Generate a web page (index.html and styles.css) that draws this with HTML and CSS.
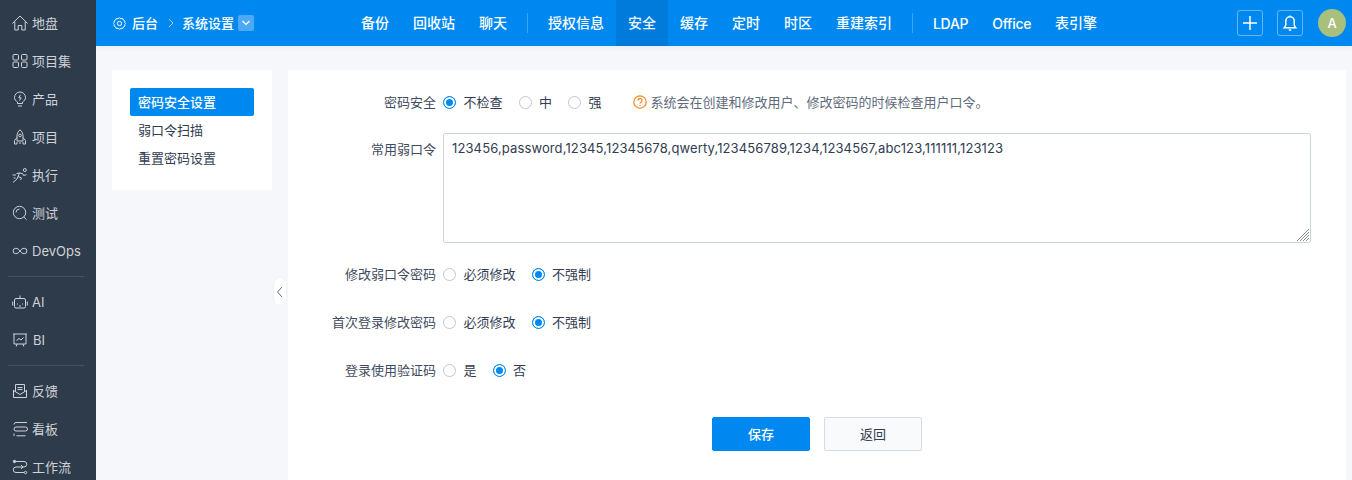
FILE: index.html
```html
<!DOCTYPE html>
<html lang="zh-CN">
<head>
<meta charset="utf-8">
<title>系统设置</title>
<link rel="stylesheet" href="styles.css">
</head>
<body>
<div class="app">
  <aside class="sidebar">
    <a class="side-item"><svg class="side-icon" viewBox="0 0 16 16"><path d="M.3 8.500 8 1l7.700 7.500M2.800 6.500v8.500h3.400v-4.500h3.600V15h3.400V6.500"/></svg><span class="cjk">地盘</span></a>
    <a class="side-item"><svg class="side-icon" viewBox="0 0 16 16"><rect x="1" y="1.500" width="5.500" height="5.500" rx="1"/><rect x="9.500" y="1.500" width="5.500" height="5.500" rx="1"/><rect x="1" y="9" width="5.500" height="5.500" rx="1"/><rect x="9.500" y="9" width="5.500" height="5.500" rx="1"/></svg><span class="cjk">项目集</span></a>
    <a class="side-item"><svg class="side-icon" viewBox="0 0 16 16"><path d="M5.500 12.500V11C3.800 10 2.500 8.500 2.500 6.500a5.500 5.500 0 0 1 11 0c0 2-1.300 3.500-3 4.500v1.500zM6 15h4M8.500 3.800 6.800 6.800h2.400L7.500 9.500"/></svg><span class="cjk">产品</span></a>
    <a class="side-item"><svg class="side-icon" viewBox="0 0 16 16"><path d="M8 .8c2 1.700 3 3.800 3 6.200v5H5V7c0-2.400 1-4.500 3-6.200zM5 8.500 2.500 11.500V15H5v-2M11 8.500l2.500 3V15H11v-2"/><circle cx="8" cy="6.500" r="1.300"/><path d="M8 13v2"/></svg><span class="cjk">项目</span></a>
    <a class="side-item"><svg class="side-icon" viewBox="0 0 16 16"><path d="M1 15.500l4-3.500 1-2.500L9.500 11l-1 2M6 9.500 7.500 6l-3 .5M7.500 6l3 .5 1 2 3-.8M.5 8H4M1.500 11H3.500"/><circle cx="12.800" cy="3" r="1.500"/></svg><span class="cjk">执行</span></a>
    <a class="side-item"><svg class="side-icon" viewBox="0 0 16 16"><circle cx="7.500" cy="7.500" r="6.200"/><path d="m11.800 12 2.700 2.700M4 7.500a3.500 3.500 0 0 1 3.500-3.500"/></svg><span class="cjk">测试</span></a>
    <a class="side-item"><svg class="side-icon" viewBox="0 0 16 16"><path d="M8 8C6.800 6.300 5.500 5.300 3.800 5.300a2.700 2.700 0 0 0 0 5.400c1.700 0 3-1 4.200-2.700zm0 0c1.200-1.700 2.500-2.700 4.200-2.700a2.700 2.700 0 0 1 0 5.400c-1.700 0-3-1-4.200-2.700z"/></svg><span>DevOps</span></a>
    <div class="side-divider"></div>
    <a class="side-item"><svg class="side-icon" viewBox="0 0 16 16"><rect x="2.500" y="4.500" width="11" height="9.500" rx="1.500"/><path d="M8 4.500V1.500M.7 7.500v4M15.300 7.500v4M5.500 9.500v1M10.500 9.500v1M7 12h2"/></svg><span>AI</span></a>
    <a class="side-item"><svg class="side-icon" viewBox="0 0 16 16"><path d="M1 2h14M2 2v10h12V2M5 12l-.8 2.500M11 12l.8 2.500M4.500 8.500 7 6.500l2 1.500 2.500-2.500"/></svg><span class="side-bi">BI</span></a>
    <div class="side-divider"></div>
    <a class="side-item"><svg class="side-icon" viewBox="0 0 16 16"><path d="M1.500 7v7.500h13V7M1.500 7.500 8 11.500l6.500-4M3.500 8.500V1.500h9v7M5.500 4.500h5M5.500 6.500h5"/></svg><span class="cjk">反馈</span></a>
    <a class="side-item"><svg class="side-icon" viewBox="0 0 16 16"><path d="M2 3.500a2 2 0 0 1 2-2h11M4 6h9.500a1.800 1.800 0 0 1 0 4H4a2 2 0 0 1 0-4zM2 12.500V15M4.500 14.800h9"/></svg><span class="cjk">看板</span></a>
    <a class="side-item"><svg class="side-icon" viewBox="0 0 16 16"><circle cx="2.500" cy="2.500" r="1.200" fill="#ced3d9"/><circle cx="13.500" cy="13.500" r="1.200"/><path d="M4 2.500h8a2.700 2.700 0 0 1 0 5.500H4a2.700 2.700 0 0 0 0 5.500h8M9 6l2 2-2 2"/></svg><span class="cjk">工作流</span></a>
  </aside>
  <div class="page">
    <header class="topbar">
      <div class="crumbs">
        <svg class="crumb-gear" viewBox="0 0 14 14"><path d="M7 .8l1.600 1 1.900-.1.800 1.700 1.600 1-.2 1.600.8 1-.8 1 .2 1.600-1.600 1-.8 1.700-1.900-.1-1.600 1-1.600-1-1.900.1-.8-1.700-1.600-1 .2-1.600-.8-1 .8-1-.2-1.600 1.600-1 .8-1.700 1.900.1z"/><circle cx="7" cy="7" r="2.300"/></svg>
        <span class="crumb-text cjk">后台</span>
        <svg class="crumb-sep" viewBox="0 0 8 10"><path d="M2 1l4 4-4 4"/></svg>
        <span class="crumb-text cjk">系统设置</span>
        <span class="crumb-drop"><svg viewBox="0 0 10 6"><path d="M1.500 1 5 4.500 8.500 1"/></svg></span>
      </div>
      <nav class="nav">
        <a class="nav-item nav-cjk">备份</a>
        <a class="nav-item nav-cjk">回收站</a>
        <a class="nav-item nav-cjk">聊天</a>
        <i class="nav-sep"></i>
        <a class="nav-item nav-cjk">授权信息</a>
        <a class="nav-item nav-cjk nav-active">安全</a>
        <a class="nav-item nav-cjk">缓存</a>
        <a class="nav-item nav-cjk">定时</a>
        <a class="nav-item nav-cjk">时区</a>
        <a class="nav-item nav-cjk">重建索引</a>
        <i class="nav-sep"></i>
        <a class="nav-item nav-latin">LDAP</a>
        <a class="nav-item nav-latin">Office</a>
        <a class="nav-item nav-cjk">表引擎</a>
      </nav>
      <div class="tools">
        <button class="tool-btn"><svg viewBox="0 0 16 16"><path d="M8 1v14M1 8h14"/></svg></button>
        <button class="tool-btn"><svg viewBox="0 0 16 16"><path d="M2.300 12.800h11.400c-1-1-1.500-2-1.500-3.500V6a4.200 4.200 0 0 0-8.400 0v3.300c0 1.500-.5 2.500-1.500 3.500zM8 .5v1.300M6.800 15h2.400"/></svg></button>
        <span class="avatar">A</span>
      </div>
    </header>
    <main class="content">
      <section class="menu-card">
        <a class="menu-item menu-active">密码安全设置</a>
        <a class="menu-item">弱口令扫描</a>
        <a class="menu-item">重置密码设置</a>
      </section>
      <button class="collapse"><svg viewBox="0 0 8 12"><path d="M6 1 1.500 6 6 11"/></svg></button>
      <section class="form-card">
        <div class="row">
          <label class="row-label cjk">密码安全</label>
          <div class="options">
            <span class="opt"><i class="radio radio-on"></i><span class="cjk">不检查</span></span>
            <span class="opt"><i class="radio"></i><span class="cjk">中</span></span>
            <span class="opt"><i class="radio"></i><span class="cjk">强</span></span>
            <span class="hint"><svg viewBox="0 0 14 14"><circle cx="7" cy="7" r="6.200"/><path d="M5 5.500a2 2 0 1 1 3 1.700c-.7.400-1 .8-1 1.600M7 10v1"/></svg><span class="cjk">系统会在创建和修改用户、修改密码的时候检查用户口令。</span></span>
          </div>
        </div>
        <div class="row row-area">
          <label class="row-label">常用弱口令</label>
          <div class="area-wrap">
            <textarea class="weak-input">123456,password,12345,12345678,qwerty,123456789,1234,1234567,abc123,111111,123123</textarea>
            <svg class="area-grip" viewBox="0 0 14 14"><path d="M13 1 1 13M13 4 4 13M13 7 7 13M13 10 10 13"/></svg>
          </div>
        </div>
        <div class="row">
          <label class="row-label cjk">修改弱口令密码</label>
          <div class="options">
            <span class="opt"><i class="radio"></i><span class="cjk">必须修改</span></span>
            <span class="opt"><i class="radio radio-on"></i><span class="cjk">不强制</span></span>
          </div>
        </div>
        <div class="row">
          <label class="row-label cjk">首次登录修改密码</label>
          <div class="options">
            <span class="opt"><i class="radio"></i><span class="cjk">必须修改</span></span>
            <span class="opt"><i class="radio radio-on"></i><span class="cjk">不强制</span></span>
          </div>
        </div>
        <div class="row">
          <label class="row-label cjk">登录使用验证码</label>
          <div class="options">
            <span class="opt"><i class="radio"></i><span class="cjk">是</span></span>
            <span class="opt"><i class="radio radio-on"></i><span class="cjk">否</span></span>
          </div>
        </div>
        <div class="actions">
          <button class="btn btn-primary">保存</button>
          <button class="btn">返回</button>
        </div>
      </section>
    </main>
  </div>
</div>
</body>
</html>
```
FILE: styles.css
```css
* { box-sizing: border-box; }
html, body { margin: 0; height: 480px; overflow: hidden; }
body {
  font-family: Inter, "Noto Sans CJK SC", sans-serif;
  font-size: 13px;
  color: #313c52;
  background: #f6f7fa;
}
.app { display: flex; height: 480px; overflow: hidden; }
.cjk { padding-bottom: 2px; }

.sidebar {
  width: 96px;
  flex: none;
  height: 480px;
  overflow: hidden;
  padding-top: 4px;
  background: #2e3b4b;
  color: #ced3d9;
}
.side-item {
  display: flex;
  align-items: center;
  gap: 4px;
  height: 38px;
  padding-left: 12px;
  white-space: nowrap;
}
.side-icon {
  width: 16px;
  height: 16px;
  flex: none;
  fill: none;
  stroke: #ced3d9;
  stroke-width: 1;
}
.side-bi { margin-left: 1px; }
.side-divider { height: 1px; margin: 6px 12px 6px 8px; background: #445261; }

.page { flex: 1; min-width: 0; display: flex; flex-direction: column; height: 480px; }

.topbar {
  display: flex;
  align-items: center;
  height: 46px;
  flex: none;
  background: #0088f1;
  color: #fff;
  box-shadow: 0 1px 6px rgba(0, 0, 0, .06);
  position: relative;
}
.crumbs { display: flex; align-items: center; width: 253px; flex: none; padding-left: 17px; }
.crumb-gear { width: 13px; height: 13px; fill: none; stroke: #fff; stroke-width: 1; margin-right: 6px; }
.crumb-text { font-weight: 500; }
.crumb-sep { width: 8px; height: 10px; margin: 0 7px 0 9px; fill: none; stroke: #a6d3fa; stroke-width: 1; }
.crumb-drop {
  display: flex;
  align-items: center;
  justify-content: center;
  width: 16px;
  height: 16px;
  margin-left: 4px;
  border-radius: 2px;
  background: #4da9f5;
}
.crumb-drop svg { width: 10px; height: 6px; fill: none; stroke: #fff; stroke-width: 1.200; }

.nav { display: flex; align-items: center; height: 46px; }
.nav-item {
  display: flex;
  align-items: center;
  height: 46px;
  padding: 0 12px;
  font-size: 14px;
  font-weight: 500;
  white-space: nowrap;
}
.nav-cjk { padding-bottom: 2px; }
.nav-latin { letter-spacing: -.3px; }
.nav-active { background: #007bdb; color: #e6f3fe; }
.nav-sep { width: 1px; height: 20px; margin: 0 8px; background: #40a5f4; }

.tools { margin-left: auto; display: flex; align-items: center; gap: 14px; padding-right: 6px; }
.tool-btn {
  display: flex;
  align-items: center;
  justify-content: center;
  width: 26px;
  height: 26px;
  padding: 0;
  border: 1px solid #66b6f6;
  border-radius: 3px;
  background: transparent;
}
.tool-btn svg { width: 16px; height: 16px; fill: none; stroke: #fff; stroke-width: 1.500; }
.avatar {
  display: flex;
  align-items: center;
  justify-content: center;
  width: 28px;
  height: 28px;
  margin-left: 1px;
  border-radius: 50%;
  background: #a8bf7d;
  color: #fff;
  font-size: 13px;
  font-weight: 500;
}

.content {
  position: relative;
  flex: 1;
  min-height: 0;
  display: flex;
  align-items: flex-start;
  gap: 16px;
  padding: 24px 6px 0 16px;
}
.menu-card {
  width: 160px;
  height: 120px;
  flex: none;
  padding: 18px;
  background: #fff;
}
.menu-item {
  display: flex;
  align-items: center;
  height: 28px;
  padding-left: 8px;
  padding-bottom: 2px;
  border-radius: 2px;
  color: #313c52;
}
.menu-active { background: #0088f1; color: #fff; font-weight: 500; }

.collapse {
  position: absolute;
  left: 178px;
  top: 232px;
  display: flex;
  align-items: center;
  justify-content: center;
  width: 12px;
  height: 27px;
  padding: 0;
  border: 0;
  border-radius: 6px;
  background: #fff;
  box-shadow: 0 0 2px rgba(0, 0, 0, .08);
}
.collapse svg { width: 8px; height: 12px; fill: none; stroke: #5e6a7a; stroke-width: 1; }

.form-card {
  flex: 1;
  min-width: 0;
  height: 410px;
  padding-top: 16px;
  background: #fff;
}
.row { display: flex; align-items: center; gap: 7px; height: 32px; margin-bottom: 16px; }
.row-area { align-items: flex-start; height: 110px; margin-top: -1px; margin-bottom: 15px; }
.row-area .row-label { padding-top: 6px; }
.row-label { width: 148px; flex: none; text-align: right; color: #3f4b60; }
.options { display: flex; align-items: center; gap: 16px; color: #313c52; }
.opt { display: flex; align-items: center; gap: 7.500px; white-space: nowrap; }
.radio {
  width: 13px;
  height: 13px;
  flex: none;
  border: 1px solid #c0c7d4;
  border-radius: 50%;
  background: #fff;
}
.radio-on { border-color: #0088f1; background: #0088f1; box-shadow: inset 0 0 0 2px #fff; }
.hint { display: flex; align-items: center; margin-left: 15px; color: #5e6a7a; white-space: nowrap; }
.hint svg { width: 14px; height: 14px; margin-right: 4px; fill: none; stroke: #f58b2f; stroke-width: 1.300; }
.area-wrap { position: relative; width: 868px; height: 110px; }
.weak-input {
  display: block;
  width: 868px;
  height: 110px;
  padding: 5px 8px;
  border: 1px solid #ced3e0;
  border-radius: 2px;
  outline: 0;
  background: #fff;
  color: #313c52;
  font: 13px/18px Inter, "Noto Sans CJK SC", sans-serif;
  letter-spacing: .123px;
  resize: none;
}
.area-grip {
  position: absolute;
  right: 1px;
  bottom: 1px;
  width: 14px;
  height: 14px;
  fill: none;
  stroke: #8c8c8c;
  stroke-width: 1;
}
.actions { display: flex; justify-content: center; gap: 14px; padding-top: 15px; }
.btn {
  width: 98px;
  height: 34px;
  padding: 0 0 2px;
  border: 1px solid #d6dae3;
  border-radius: 2px;
  background: #f9fafb;
  color: #313c52;
  font: 13px Inter, "Noto Sans CJK SC", sans-serif;
}
.btn-primary { border-color: #0088f1; background: #0088f1; color: #fff; font-weight: 500; }
```
